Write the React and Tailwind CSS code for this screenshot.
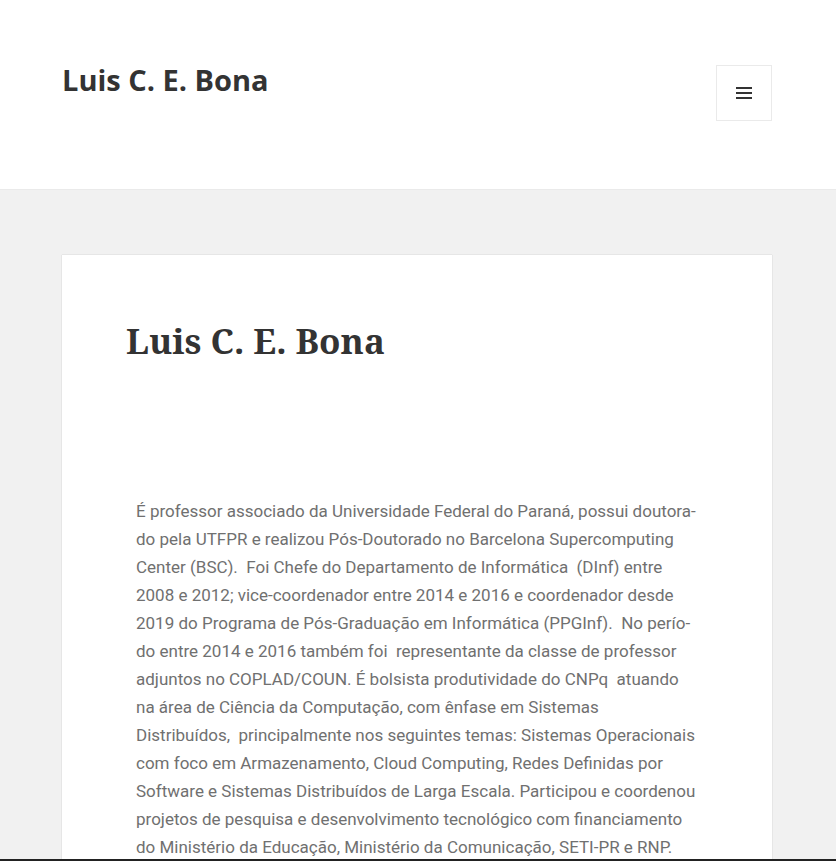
import React from "react";

const lines = [
  "É professor associado da Universidade Federal do Paraná, possui doutora-",
  "do pela UTFPR e realizou Pós-Doutorado no Barcelona Supercomputing",
  "Center (BSC).  Foi Chefe do Departamento de Informática  (DInf) entre",
  "2008 e 2012; vice-coordenador entre 2014 e 2016 e coordenador desde",
  "2019 do Programa de Pós-Graduação em Informática (PPGInf).  No perío-",
  "do entre 2014 e 2016 também foi  representante da classe de professor",
  "adjuntos no COPLAD/COUN. É bolsista produtividade do CNPq  atuando",
  "na área de Ciência da Computação, com ênfase em Sistemas",
  "Distribuídos,  principalmente nos seguintes temas: Sistemas Operacionais",
  "com foco em Armazenamento, Cloud Computing, Redes Definidas por",
  "Software e Sistemas Distribuídos de Larga Escala. Participou e coordenou",
  "projetos de pesquisa e desenvolvimento tecnológico com financiamento",
  "do Ministério da Educação, Ministério da Comunicação, SETI-PR e RNP.",
];

const App = () => {
  return (
    <div className="min-h-screen bg-[#f1f1f1]">
      <header className="bg-white border-b border-[#eaeaea] h-[190px] pl-[62px] pr-[64px] pt-[65px] flex items-start justify-between">
        <h1 className="font-['Open_Sans',sans-serif] font-bold text-[29px] leading-[34px] text-[#333] mt-[-2px]">
          Luis C. E. Bona
        </h1>
        <button className="w-[56px] h-[56px] border border-[#eaeaea] bg-white flex flex-col items-center justify-center gap-[3px]">
          <span className="block w-[16px] h-[2px] bg-[#333]" />
          <span className="block w-[16px] h-[2px] bg-[#333]" />
          <span className="block w-[16px] h-[2px] bg-[#333]" />
        </button>
      </header>

      <main className="pl-[62px] pr-[64px] pt-[65px]">
        <article className="bg-white shadow-[0_0_1px_rgba(0,0,0,0.25)] pt-[60px] px-[64px] pb-[60px]">
          <h2 className="font-['Noto_Serif',serif] font-bold text-[35px] leading-[52px] text-[#333]">
            Luis C. E. Bona
          </h2>
          <div className="mt-[130px] pl-[10px] font-['Roboto',sans-serif] text-[17px] leading-[28px] text-[#707070]">
            {lines.map((l, i) => (
              <div key={i} className="whitespace-pre">
                {l}
              </div>
            ))}
          </div>
        </article>
      </main>

      <div className="fixed left-0 right-0 bottom-0 h-[2px] bg-[#222]" />
    </div>
  );
};

export default App;
